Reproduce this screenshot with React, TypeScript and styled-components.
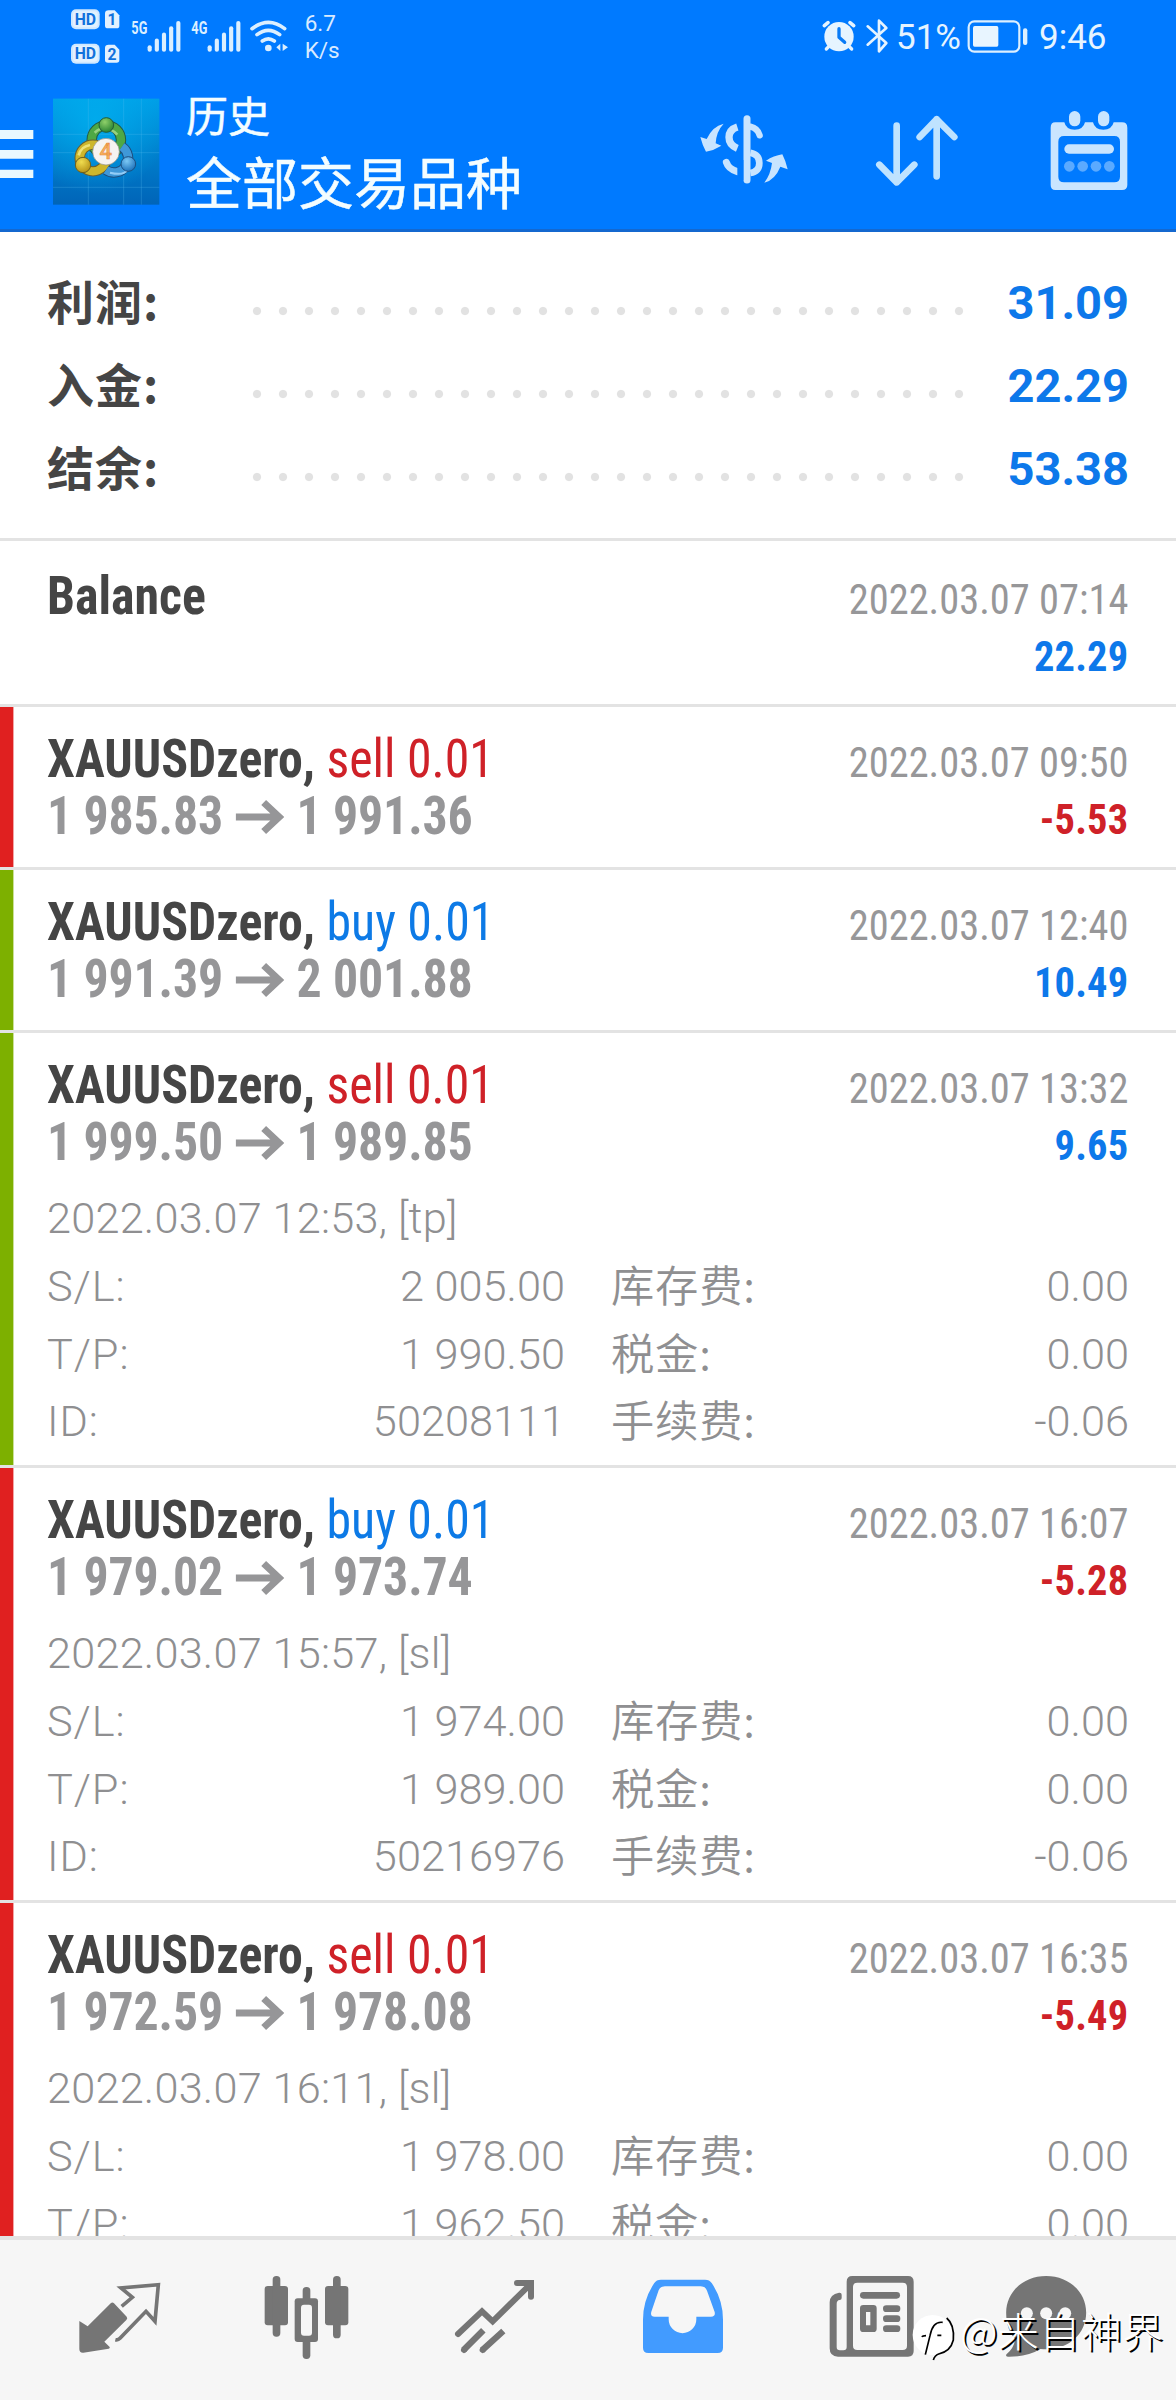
import React from "react";
import styled, { createGlobalStyle } from "styled-components";

const ROBOTO = `Roboto, "Noto Sans CJK SC", sans-serif`;
const CJK = `"Noto Sans CJK SC", sans-serif`;
/* Extra horizontal squeeze applied to the condensed Roboto lines. */
const SQ = 0.934;

const Global = createGlobalStyle`
  * { box-sizing: border-box; }
  body { margin: 0; background: #fff; font-family: ${ROBOTO}; }
`;

const Screen = styled.div`
  width: 1176px;
  height: 2400px;
  display: flex;
  flex-direction: column;
  overflow: hidden;
  background: #fff;
`;

const Header = styled.header`
  flex: none;
  height: 232px;
  background: #007aff;
  border-bottom: 3px solid #1468cf;
  color: #f3fbff;
`;

const StatusBar = styled.div`
  display: flex;
  height: 77px;
  padding-left: 71px;
`;

const Glyph = styled.svg<{ $w: number; $h: number }>`
  display: block;
  flex: none;
  width: ${(p) => p.$w}px;
  height: ${(p) => p.$h}px;
`;

const Speed = styled.div`
  padding: 10px 0 0 12px;
  font-size: 22.5px;
  line-height: 27px;
  color: #d9ebff;
  span { display: block; }
`;

const StatusRight = styled.div`
  display: flex;
  width: 356px;
  margin-left: auto;
`;

const StatusText = styled.span<{ $w: number }>`
  width: ${(p) => p.$w}px;
  padding-top: 17px;
  font-size: 35px;
  line-height: 42px;
  white-space: nowrap;
  color: #e6f4ff;
`;

const AppBar = styled.div`
  display: flex;
  height: 154px;
`;

const Titles = styled.div`
  padding: 12px 0 0 26px;
  font-family: ${CJK};
  color: #f4fdff;
  white-space: nowrap;
  -webkit-text-stroke: 0.5px #f4fdff;
`;
const Title = styled.div`
  font-size: 42px;
  line-height: 50px;
`;
const Subtitle = styled.div`
  font-size: 56px;
  line-height: 81px;
`;
const Actions = styled.div`
  display: flex;
  margin-left: auto;
`;

const Summary = styled.section`
  flex: none;
  height: 309px;
  padding: 29px 47px 0;
  border-bottom: 3px solid #e3e3e3;
`;
const SummaryRow = styled.div`
  display: flex;
  height: 83px;
`;
const SummaryLabel = styled.span`
  width: 197px;
  font-family: ${CJK};
  font-size: 47px;
  font-weight: 700;
  line-height: 77px;
  letter-spacing: 1px;
  color: #454545;
`;
const Dots = styled.span`
  width: 728px;
  height: 26px;
  margin-top: 37px;
  background: radial-gradient(circle at 50% 50%, #e2e2e2 3.6px, transparent 4.6px) 0 0 / 26px 26px repeat-x;
`;
const SummaryValue = styled.span`
  margin-left: auto;
  font-size: 47px;
  font-weight: 700;
  line-height: 83px;
  color: #0d78ea;
`;

const List = styled.main`
  height: 1695px;
  flex: none;
  padding-top: 3px;
  overflow: hidden;
`;

const Row = styled.article<{ $strip?: string; $tall?: boolean }>`
  height: ${(p) => (p.$tall ? 435 : 163)}px;
  padding: 0 47px;
  border-bottom: 3px solid #e3e3e3;
  box-shadow: ${(p) => (p.$strip ? `inset 13.4px 0 0 ${p.$strip}` : "none")};
`;

const Main = styled.div`
  display: flex;
  justify-content: space-between;
  height: 152.2px;
`;
const Left = styled.div`
  padding-top: 23.3px;
  font-size: 53.4px;
  line-height: 57px;
  font-weight: 700;
  white-space: nowrap;
  font-stretch: 75%;
  transform: scaleX(${SQ});
  transform-origin: 0 0;
`;
const Symbol = styled.div`
  color: #454545;
`;
const Side = styled.span<{ $kind: "buy" | "sell" }>`
  font-weight: 400;
  color: ${(p) => (p.$kind === "buy" ? "#0d7ae6" : "#cf2128")};
`;
const Prices = styled.div`
  letter-spacing: -0.15px;
  color: #969698;
`;
const ArrowSvg = styled.svg`
  width: ${48 / SQ}px;
  height: 36px;
  margin: 0 ${12.5 / SQ}px -1px ${13 / SQ}px;
`;
const Right = styled.div`
  margin-right: 1px;
  padding-top: 26.7px;
  text-align: right;
  font-size: 43.3px;
  line-height: 57px;
  white-space: nowrap;
  font-stretch: 75%;
  transform: scaleX(${SQ});
  transform-origin: 100% 0;
`;
const Time = styled.div`
  color: #979799;
`;
const Profit = styled.div<{ $neg: boolean }>`
  font-weight: 700;
  letter-spacing: 0.2px;
  color: ${(p) => (p.$neg ? "#cf2128" : "#0d78ea")};
`;

const Details = styled.div`
  display: grid;
  grid-template-columns: 518px 518px;
  column-gap: 46px;
  font-size: 43.3px;
  font-weight: 350;
  line-height: 67.7px;
  color: #8f8f91;
  white-space: nowrap;
`;
const Opened = styled.div`
  grid-column: 1 / 3;
  letter-spacing: 0.2px;
`;
const Pair = styled.div`
  display: flex;
  justify-content: space-between;
  height: 67.7px;
`;
const Label = styled.span`
  letter-spacing: 0.9px;
`;
const CjkLabel = styled.span`
  font-family: ${CJK};
  line-height: 61px;
  letter-spacing: 0.8px;
`;

const Nav = styled.nav`
  flex: none;
  display: flex;
  height: 164px;
  padding-left: 24px;
  border-top: 4px solid #e3e3e3;
  background: #f6f6f6;
  position: relative;
`;
const NavItem = styled.div<{ $w?: number }>`
  display: flex;
  align-items: center;
  justify-content: center;
  width: ${(p) => p.$w ?? 188}px;
`;
const Watermark = styled.div`
  position: absolute;
  left: 909px;
  top: 59px;
  display: flex;
  font-family: ${CJK};
  font-weight: 300;
  font-size: 41px;
  letter-spacing: 0.5px;
  line-height: 60px;
  white-space: nowrap;
  color: #fff;
  text-shadow: 2px 1.5px 0 #000;
`;

const RED = "#e02020";
const GREEN = "#7db000";

type Trade = {
  side: "buy" | "sell";
  from: string;
  to: string;
  time: string;
  profit: string;
  strip: string;
  opened?: string;
  sl?: string;
  tp?: string;
  id?: string;
};

const trades: Trade[] = [
  { side: "sell", from: "1 985.83", to: "1 991.36", time: "2022.03.07 09:50", profit: "-5.53", strip: RED },
  { side: "buy", from: "1 991.39", to: "2 001.88", time: "2022.03.07 12:40", profit: "10.49", strip: GREEN },
  { side: "sell", from: "1 999.50", to: "1 989.85", time: "2022.03.07 13:32", profit: "9.65", strip: GREEN, opened: "2022.03.07 12:53, [tp]", sl: "2 005.00", tp: "1 990.50", id: "50208111" },
  { side: "buy", from: "1 979.02", to: "1 973.74", time: "2022.03.07 16:07", profit: "-5.28", strip: RED, opened: "2022.03.07 15:57, [sl]", sl: "1 974.00", tp: "1 989.00", id: "50216976" },
  { side: "sell", from: "1 972.59", to: "1 978.08", time: "2022.03.07 16:35", profit: "-5.49", strip: RED, opened: "2022.03.07 16:11, [sl]", sl: "1 978.00", tp: "1 962.50" },
];

const HdBadges = () => (
  <Glyph viewBox="213 0 165 231" $w={55} $h={77} fill="#cfe8ff">
    {[28, 131].map((y, i) => (
      <g key={y}>
        <rect x="213" y={y} width="86" height="60" rx="15" />
        <rect x="219" y={y + 6} width="74" height="48" rx="10" fill="#e2f1ff" />
        <text x="256" y={y + 47} fontFamily="Roboto" fontWeight="700" fontSize="49" textAnchor="middle" textLength="64" lengthAdjust="spacingAndGlyphs" fill="#1172dc">HD</text>
        <path d={`M326 ${y + 3}h18l14 15v31q0 8-8 8h-26q-9 0-9-8v-37q0-9 11-9z`} fill="#e2f1ff" />
        <text x="336" y={y + 48} fontFamily="Roboto" fontWeight="700" fontSize="47" textAnchor="middle" fill="#1172dc">{i + 1}</text>
      </g>
    ))}
  </Glyph>
);

const Signal = ({ x, w, label }: { x: number; w: number; label: string }) => (
  <Glyph viewBox={`${x} 0 ${w} 231`} $w={w / 3} $h={77} stroke="#dcefff" strokeWidth="12.5" strokeLinecap="round">
    <text x={x + 16} y="102" stroke="none" fill="#dcefff" fontFamily="Roboto" fontWeight="700" fontSize="54" textLength="48" lengthAdjust="spacingAndGlyphs">{label}</text>
    {[142, 122, 104, 85, 69].map((y, i) => (
      <path key={y} d={`M${x + 71 + i * 21.5} ${y}V149`} />
    ))}
  </Glyph>
);

const Wifi = () => (
  <Glyph viewBox="740 0 140 231" $w={140 / 3} $h={77} fill="none" stroke="#dcefff" strokeWidth="11" strokeLinecap="round">
    <path d="M758 86q50-38 98 0M773 104q34-26 68 0M789 123q18-13 36 0" />
    <circle cx="807" cy="144" r="10" fill="#dcefff" stroke="none" />
    <path d="M843 131v22l-12-11zM850 131v22l16-11z" fill="#dcefff" stroke="none" />
  </Glyph>
);

const Alarm = () => (
  <Glyph viewBox="420 0 120 231" $w={40} $h={77} fill="none" stroke="#e6f4ff" strokeLinecap="round">
    <circle cx="477" cy="110" r="44" fill="#e6f4ff" stroke="none" />
    <path d="M433 77l11-9M521 77l-11-9" strokeWidth="11" />
    <path d="M439 147l10-10M515 147l-10-10" strokeWidth="10" />
    <path d="M477 86v26l17 15" stroke="#0a7bf6" strokeWidth="10" strokeLinejoin="round" />
  </Glyph>
);

const Bluetooth = () => (
  <Glyph viewBox="540 0 108 231" $w={36} $h={77} fill="none" stroke="#e6f4ff" strokeWidth="8" strokeLinecap="round" strokeLinejoin="round">
    <path d="M563 79l56 50-22 25V62l22 22-56 50" />
  </Glyph>
);

const Battery = () => (
  <Glyph viewBox="855 0 222 231" $w={74} $h={77}>
    <rect x="866" y="64" width="152" height="91" rx="17" fill="none" stroke="#dcefff" strokeWidth="6.5" />
    <rect x="879" y="78" width="76" height="62" rx="5" fill="#e8f5ff" />
    <rect x="1029" y="85" width="13" height="50" rx="6" fill="#dcefff" />
  </Glyph>
);

const Menu = () => (
  <Glyph viewBox="0 231 159 462" $w={53} $h={154} fill="#e9f8ff">
    <path d="M0 390h100v27H0zM0 450h100v26H0zM0 509h100v25H0z" />
  </Glyph>
);

const Logo = () => (
  <Glyph viewBox="159 231 321 462" $w={107} $h={154}>
    <defs>
      <linearGradient id="bg" x1="0" y1="0" x2="0" y2="1">
        <stop offset="0" stopColor="#009ee6" />
        <stop offset=".45" stopColor="#0083cf" />
        <stop offset="1" stopColor="#0064b8" />
      </linearGradient>
      <radialGradient id="glow" cx=".4" cy=".2" r=".7">
        <stop offset="0" stopColor="#00b0f0" stopOpacity=".8" />
        <stop offset="1" stopColor="#00b0f0" stopOpacity="0" />
      </radialGradient>
      <radialGradient id="green" cx=".4" cy=".3" r=".8">
        <stop offset="0" stopColor="#8fd06a" />
        <stop offset="1" stopColor="#1d7a2b" />
      </radialGradient>
      <radialGradient id="gold" cx=".4" cy=".3" r=".8">
        <stop offset="0" stopColor="#f0dc50" />
        <stop offset="1" stopColor="#b08a10" />
      </radialGradient>
      <radialGradient id="azure" cx=".4" cy=".3" r=".8">
        <stop offset="0" stopColor="#7cc8f5" />
        <stop offset="1" stopColor="#1268b4" />
      </radialGradient>
    </defs>
    <rect x="159" y="296" width="319" height="318" fill="url(#bg)" />
    <rect x="159" y="296" width="319" height="318" fill="url(#glow)" />
    <path d="M265 296v318M424 296v318M371 296v318M159 403h319M159 562h319M159 458h319" stroke="#5cc0f0" strokeOpacity=".4" strokeWidth="2" />
    <g fill="none">
      <circle cx="319" cy="420" r="44" stroke="#235c48" strokeWidth="31" />
      <circle cx="319" cy="420" r="44" stroke="#4ea845" strokeWidth="25" />
      <circle cx="279" cy="474" r="40" stroke="#6a5f30" strokeWidth="31" />
      <circle cx="279" cy="474" r="40" stroke="#cdb62c" strokeWidth="25" />
      <path d="M366 440a42 42 0 1 1-48 70" stroke="#1c4f80" strokeWidth="31" />
      <path d="M366 440a42 42 0 1 1-48 70" stroke="#3f98d8" strokeWidth="25" />
    </g>
    <path d="M284 398q32-30 68 6" stroke="#b5e29a" strokeWidth="8" fill="none" opacity=".7" />
    <path d="M236 466q6-26 34-31" stroke="#f7ec8a" strokeWidth="8" fill="none" opacity=".8" />
    <path d="M330 518q40 10 52-8" stroke="#a9dbff" strokeWidth="6" fill="none" opacity=".8" />
    <circle cx="319" cy="375" r="22" fill="url(#green)" stroke="#235c38" strokeWidth="3" />
    <circle cx="249" cy="495" r="23" fill="url(#gold)" stroke="#6a5f20" strokeWidth="3" />
    <circle cx="385" cy="492" r="22" fill="url(#azure)" stroke="#1c4f80" strokeWidth="3" />
    <circle cx="318" cy="455" r="40" fill="#f6f3f0" stroke="#8c8c84" strokeWidth="2" />
    <text x="317" y="478" textAnchor="middle" fontFamily="Roboto" fontWeight="500" fontSize="66" fill="#f6b25e" stroke="#e8863a" strokeWidth="1.5">4</text>
  </Glyph>
);

const Currency = () => (
  <Glyph viewBox="50 231 450 462" $w={150} $h={154} fill="none" stroke="#c8e4ff">
    <path d="M200 356V540" strokeWidth="21" strokeLinecap="round" />
    <path d="M171 381q-25 8-25 31t25 33" strokeWidth="22" />
    <path d="M210 380q22 5 28 26" strokeWidth="19" strokeLinecap="round" />
    <path d="M138 487q6 20 33 28" strokeWidth="21" strokeLinecap="round" />
    <path d="M171 480h18v60h-18z" fill="#007aff" stroke="none" />
    <path d="M210 458q27 5 27 31t-27 30" strokeWidth="20" />
    <path d="M130 371q-34 8-51 46l-19-6q6 24 17 44q24-4 46-18l-17-7q2-36 24-59zM252 548q32-8 48-48l22 8q-6-26-16-45q-26 4-49 19l18 7q-4 34-23 59z" fill="#c8e4ff" stroke="none" />
  </Glyph>
);

const SortArrows = () => (
  <Glyph viewBox="500 231 500 462" $w={500 / 3} $h={154} fill="none" stroke="#bfe3ff" strokeWidth="20" strokeLinecap="round" strokeLinejoin="round">
    <path d="M649 377V547M597 494l52 53 53-53M769 529V358M718 411l51-53 53 53" />
  </Glyph>
);

const CalendarIcon = () => (
  <Glyph viewBox="1000 231 488 462" $w={488 / 3} $h={154} fill="#c9e5ff">
    <path fillRule="evenodd" d="M1127 367h27q5 22 31 22t31-22h24q5 22 31 22t31-22h25q16 0 16 16v172q0 15-16 15h-200q-14 0-14-15V383q0-16 14-16zM1153 408q-17 0-17 17v105q0 17 17 17h151q17 0 17-17V425q0-17-17-17z" />
    <rect x="1168" y="333" width="34" height="46" rx="17" />
    <rect x="1255" y="333" width="34" height="46" rx="17" />
    <rect x="1154" y="433" width="149" height="28" rx="14" />
    {[1169, 1209, 1249, 1289].map((x) => (
      <circle key={x} cx={x} cy="499" r="16" opacity=".45" />
    ))}
  </Glyph>
);

const Arrow = () => (
  <ArrowSvg viewBox="0 0 48 36" preserveAspectRatio="none" fill="none" stroke="#969698" strokeWidth="7">
    <path d="M0 18H43M28 3.500L43.500 18 28 32.500" />
  </ArrowSvg>
);

const TradeRow = ({ t }: { t: Trade }) => (
  <Row $strip={t.strip} $tall={!!t.opened}>
    <Main>
      <Left>
        <Symbol>
          XAUUSDzero, <Side $kind={t.side}>{t.side} 0.01</Side>
        </Symbol>
        <Prices>
          {t.from}
          <Arrow />
          {t.to}
        </Prices>
      </Left>
      <Right>
        <Time>{t.time}</Time>
        <Profit $neg={t.profit.startsWith("-")}>{t.profit}</Profit>
      </Right>
    </Main>
    {t.opened && (
      <Details>
        <Opened>{t.opened}</Opened>
        <Pair><Label>S/L:</Label><span>{t.sl}</span></Pair>
        <Pair><CjkLabel>库存费:</CjkLabel><span>0.00</span></Pair>
        <Pair><Label>T/P:</Label><span>{t.tp}</span></Pair>
        <Pair><CjkLabel>税金:</CjkLabel><span>0.00</span></Pair>
        {t.id && (
          <>
            <Pair><Label>ID:</Label><span>{t.id}</span></Pair>
            <Pair><CjkLabel>手续费:</CjkLabel><span>-0.06</span></Pair>
          </>
        )}
      </Details>
    )}
  </Row>
);

const GREY = "#757575";

export default function App() {
  return (
    <Screen>
      <Global />
      <Header>
        <StatusBar>
          <HdBadges />
          <Signal x={378} w={180} label="5G" />
          <Signal x={560} w={180} label="4G" />
          <Wifi />
          <Speed><span>6.7</span><span>K/s</span></Speed>
          <StatusRight>
            <Alarm />
            <Bluetooth />
            <StatusText $w={69}>51%</StatusText>
            <Battery />
            <StatusText $w={80}>9:46</StatusText>
          </StatusRight>
        </StatusBar>
        <AppBar>
          <Menu />
          <Logo />
          <Titles>
            <Title>历史</Title>
            <Subtitle>全部交易品种</Subtitle>
          </Titles>
          <Actions>
            <Currency />
            <SortArrows />
            <CalendarIcon />
          </Actions>
        </AppBar>
      </Header>

      <Summary>
        {[["利润:", "31.09"], ["入金:", "22.29"], ["结余:", "53.38"]].map(([l, v]) => (
          <SummaryRow key={l}>
            <SummaryLabel>{l}</SummaryLabel>
            <Dots />
            <SummaryValue>{v}</SummaryValue>
          </SummaryRow>
        ))}
      </Summary>

      <List>
        <Row>
          <Main>
            <Left><Symbol>Balance</Symbol></Left>
            <Right>
              <Time>2022.03.07 07:14</Time>
              <Profit $neg={false}>22.29</Profit>
            </Right>
          </Main>
        </Row>
        {trades.map((t) => <TradeRow key={t.time} t={t} />)}
      </List>

      <Nav>
        <NavItem>
          <Glyph viewBox="204 150 300 300" $w={100} $h={100}>
            <path d="M333 249q5-3 9 1l38 40q4 5-1 10l-66 65 16 16q2 4-3 5l-76 12q-12 1-12-11v-84l25 16z" fill={GREY} />
            <path d="M365 259l32-27-34-28 112-10-10 110-27-30-78 81q-6 6-14 4" fill="none" stroke={GREY} strokeWidth="11" />
          </Glyph>
        </NavItem>
        <NavItem>
          <Glyph viewBox="768 150 300 300" $w={100} $h={100} fill={GREY}>
            <rect x="794" y="198" width="70" height="118" rx="9" />
            <rect x="818" y="168" width="23" height="182" rx="11" />
            <rect x="975" y="198" width="70" height="118" rx="9" />
            <rect x="999" y="168" width="23" height="187" rx="11" />
            <rect x="908" y="201" width="23" height="216" rx="11" />
            <rect x="884" y="235" width="70" height="131" rx="9" />
            <rect x="903" y="254" width="33" height="93" rx="9" fill="#f6f6f6" />
          </Glyph>
        </NavItem>
        <NavItem>
          <Glyph viewBox="132 150 300 300" $w={100} $h={100} fill="none" stroke={GREY} strokeWidth="18" strokeLinecap="round">
            <path d="M174 342l72-68 32 30 112-110M351 189h42v41" />
            <path d="M190 391l60-60M246 391l64-58" strokeLinecap="butt" strokeWidth="19" />
            <path d="M192 390l1-1M248 390l1-1" />
          </Glyph>
        </NavItem>
        <NavItem>
          <Glyph viewBox="696 150 300 300" $w={100} $h={100}>
            <path fillRule="evenodd" fill="#429bff" d="M783 179h132q14 0 20 10q34 50 34 110v84q0 16-16 16H745q-16 0-16-16v-84q0-60 34-110q6-10 20-10zM795 199q-14 0-19 12l-22 64q-4 15 10 15h42v8a41 41 0 0 0 83 0v-8h44q14 0 11-14l-23-64q-5-13-19-13z" />
          </Glyph>
        </NavItem>
        <NavItem>
          <Glyph viewBox="120 150 300 300" $w={100} $h={100} fill={GREY}>
            <path fillRule="evenodd" d="M217 168h167q17 0 17 17v208q0 17-17 17H174q-25 0-25-25V247q0-24 28-29q8-1 8 6v10q0 6-6 6q-9 1-9 12v129q0 10 10 10h10q10 0 10-10V185q0-17 17-17zM232 188q-13 0-13 13v176q0 13 13 13h136q13 0 13-13V201q0-13-13-13z" />
            <rect x="240" y="216" width="120" height="20" rx="10" />
            <path fillRule="evenodd" d="M250 255h30q10 0 10 10v61q0 10-10 10h-30q-10 0-10-10v-61q0-10 10-10zM258 276v40h13v-40z" />
            <rect x="309" y="256" width="52" height="20" rx="10" />
            <rect x="309" y="286" width="52" height="20" rx="10" />
            <rect x="309" y="316" width="52" height="20" rx="10" />
          </Glyph>
        </NavItem>
        <NavItem $w={163}>
          <Glyph viewBox="646.5 150 300 300" $w={100} $h={100}>
            <path fill={GREY} d="M797 168c68 0 120 48 120 110s-52 110-120 110q-8 0-17-1q-40 24-98 23q-8-1-4-7q22-18 26-45c-18-20-27-47-27-80c0-62 52-110 120-110z" />
            <g fill="#f6f6f6">
              <circle cx="739" cy="280" r="18" />
              <circle cx="797" cy="280" r="18" />
              <circle cx="854" cy="280" r="18" />
            </g>
          </Glyph>
        </NavItem>
        <Watermark>
          <Glyph viewBox="387 237 153 180" $w={51} $h={60} overflow="visible">
            <circle cx="458" cy="345" r="60" fill="#fff" />
            <path d="M488 307q-30-4-38 40l-14 57M426 351q2-4 12-4M472 346h12M500 294q24 20 20 66q-8 34-44 42q-12 4-16 18" fill="none" stroke="#000" strokeWidth="5" />
          </Glyph>
          @来自神界
        </Watermark>
      </Nav>
    </Screen>
  );
}
